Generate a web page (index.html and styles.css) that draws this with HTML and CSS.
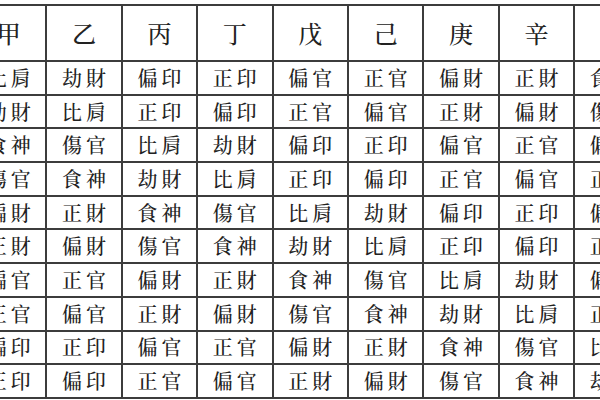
FILE: index.html
```html
<!DOCTYPE html>
<html lang="zh-Hant">
<head>
<meta charset="utf-8">
<title>十神表</title>
<link rel="stylesheet" href="styles.css">
</head>
<body>
<table class="shishen">
  <colgroup>
    <col class="c"><col class="c"><col class="c"><col class="c"><col class="c">
    <col class="c"><col class="c"><col class="c"><col class="c"><col class="c">
  </colgroup>
  <thead>
    <tr class="head">
      <th>甲</th><th>乙</th><th>丙</th><th>丁</th><th>戊</th><th>己</th><th>庚</th><th>辛</th><th>壬</th><th>癸</th>
    </tr>
  </thead>
  <tbody>
    <tr><td>比肩</td><td>劫財</td><td>偏印</td><td>正印</td><td>偏官</td><td>正官</td><td>偏財</td><td>正財</td><td>食神</td><td>傷官</td></tr>
    <tr><td>劫財</td><td>比肩</td><td>正印</td><td>偏印</td><td>正官</td><td>偏官</td><td>正財</td><td>偏財</td><td>傷官</td><td>食神</td></tr>
    <tr><td>食神</td><td>傷官</td><td>比肩</td><td>劫財</td><td>偏印</td><td>正印</td><td>偏官</td><td>正官</td><td>偏財</td><td>正財</td></tr>
    <tr><td>傷官</td><td>食神</td><td>劫財</td><td>比肩</td><td>正印</td><td>偏印</td><td>正官</td><td>偏官</td><td>正財</td><td>偏財</td></tr>
    <tr><td>偏財</td><td>正財</td><td>食神</td><td>傷官</td><td>比肩</td><td>劫財</td><td>偏印</td><td>正印</td><td>偏官</td><td>正官</td></tr>
    <tr><td>正財</td><td>偏財</td><td>傷官</td><td>食神</td><td>劫財</td><td>比肩</td><td>正印</td><td>偏印</td><td>正官</td><td>偏官</td></tr>
    <tr><td>偏官</td><td>正官</td><td>偏財</td><td>正財</td><td>食神</td><td>傷官</td><td>比肩</td><td>劫財</td><td>偏印</td><td>正印</td></tr>
    <tr><td>正官</td><td>偏官</td><td>正財</td><td>偏財</td><td>傷官</td><td>食神</td><td>劫財</td><td>比肩</td><td>正印</td><td>偏印</td></tr>
    <tr><td>偏印</td><td>正印</td><td>偏官</td><td>正官</td><td>偏財</td><td>正財</td><td>食神</td><td>傷官</td><td>比肩</td><td>劫財</td></tr>
    <tr><td>正印</td><td>偏印</td><td>正官</td><td>偏官</td><td>正財</td><td>偏財</td><td>傷官</td><td>食神</td><td>劫財</td><td>比肩</td></tr>
  </tbody>
</table>
</body>
</html>
```

FILE: styles.css
```css
html, body {
  margin: 0;
  padding: 0;
  background: #ffffff;
  overflow: hidden;
  width: 600px;
  height: 400px;
}

.shishen {
  border-collapse: collapse;
  table-layout: fixed;
  width: 754px;
  margin: 4px 0 0 -30px;
  font-family: "Noto Serif CJK TC", "Noto Sans CJK TC", "Noto Sans CJK SC", serif;
  color: #222222;
}

.shishen .c {
  width: 75.4px;
}

.shishen th,
.shishen td {
  border: 2px solid #3c3c3c;
  text-align: center;
  vertical-align: middle;
  padding: 0;
  line-height: 1;
  white-space: nowrap;
  overflow: hidden;
}

.shishen .head {
  height: 56px;
}

.shishen th {
  font-size: 24px;
  font-weight: 500;
}

.shishen tbody tr {
  height: 33.7px;
}

.shishen td {
  font-size: 20px;
  font-weight: 500;
  letter-spacing: 4px;
  text-indent: 4px;
}
```
